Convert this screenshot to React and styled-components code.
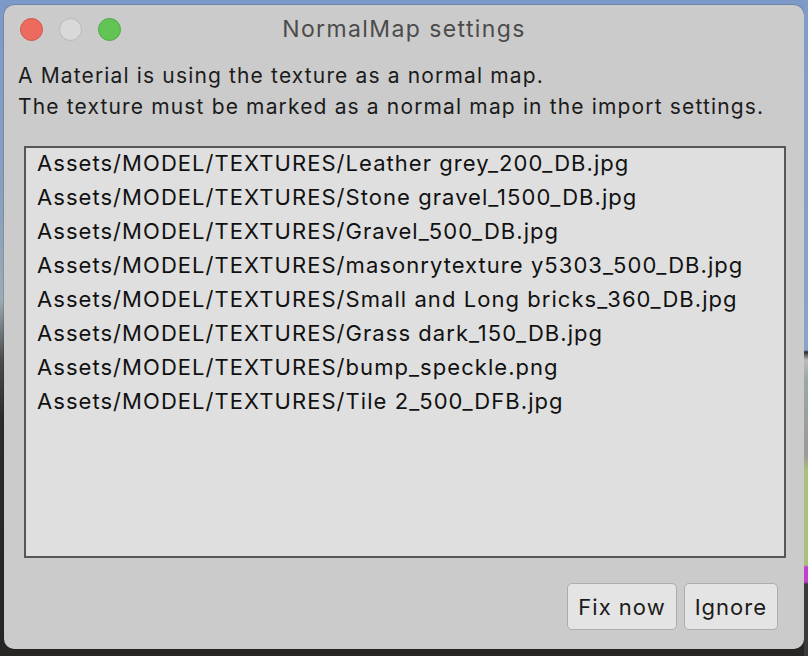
import React from "react";
import styled, { createGlobalStyle } from "styled-components";

const Global = createGlobalStyle`
  html, body { margin: 0; padding: 0; }
  body {
    width: 808px;
    height: 656px;
    overflow: hidden;
    background: linear-gradient(180deg, #7d99c7 0px, #8aa0bd 200px, #9aabb3 300px, #4a4a4a 360px, #2c2b2a 420px, #272625 656px);
    font-family: Inter, "Noto Sans", sans-serif;
  }
`;

const Desktop = styled.div`
  padding: 5px 4px 7px 4px;
  box-sizing: border-box;
  height: 656px;
  display: flex;
  position: relative;
`;

const SideStrip = styled.div`
  position: absolute;
  right: 0;
  top: 0;
  width: 4px;
  height: 656px;
  background: linear-gradient(180deg, #7f9cc8 0px, #8aa3c9 350px, #2a2a2a 352px, #bbbbbb 360px, #9aa6a6 380px, #9a9a9a 455px, #a8c07a 470px, #a8c07a 565px, #c23fd0 567px, #c23fd0 582px, #3a3a3a 584px);
`;

const Window = styled.div`
  flex: 1;
  background: #cbcbcb;
  border-radius: 10px;
  display: flex;
  flex-direction: column;
  overflow: hidden;
  box-shadow: 0 0 0 0.5px rgba(0,0,0,0.25);
`;

const TitleBar = styled.div`
  height: 48px;
  display: flex;
  align-items: center;
  position: relative;
  padding-left: 16px;
  gap: 16px;
`;

const Light = styled.span`
  width: 23px;
  height: 23px;
  border-radius: 50%;
  box-sizing: border-box;
  background: ${(p) => p.$bg};
  border: 1px solid ${(p) => p.$border};
`;

const Title = styled.div`
  position: absolute;
  left: 0;
  right: 0;
  top: 0;
  height: 48px;
  line-height: 48px;
  text-align: center;
  font-size: 23px;
  letter-spacing: 1.4px;
  color: #4b4b4b;
  pointer-events: none;
`;

const Message = styled.div`
  margin: 7px 0 0 14px;
  font-size: 21px;
  letter-spacing: 1.15px;
  line-height: 31px;
  color: #1b1b1b;
  white-space: nowrap;
`;

const ListBox = styled.div`
  margin: 24px 18px 0 20px;
  height: 412px;
  box-sizing: border-box;
  border: 2px solid #575757;
  background: #dfdfdf;
  padding: 0 0 0 11px;
  overflow: hidden;
`;

const Items = styled.div`
  margin-top: -2px;
`;

const Item = styled.div`
  font-size: 22px;
  letter-spacing: 1.05px;
  line-height: 34px;
  color: #111;
  white-space: nowrap;
`;

const Footer = styled.div`
  display: flex;
  justify-content: flex-end;
  gap: 7px;
  padding: 25px 26px 0 0;
`;

const Button = styled.button`
  height: 47px;
  padding: 0 10px;
  font-family: Inter, "Noto Sans", sans-serif;
  font-size: 22px;
  letter-spacing: 1px;
  color: #1b1b1b;
  background: #e4e4e4;
  border: 1px solid #adadad;
  border-radius: 5px;
  box-sizing: border-box;
`;

const files = [
  "Assets/MODEL/TEXTURES/Leather grey_200_DB.jpg",
  "Assets/MODEL/TEXTURES/Stone gravel_1500_DB.jpg",
  "Assets/MODEL/TEXTURES/Gravel_500_DB.jpg",
  "Assets/MODEL/TEXTURES/masonrytexture y5303_500_DB.jpg",
  "Assets/MODEL/TEXTURES/Small and Long bricks_360_DB.jpg",
  "Assets/MODEL/TEXTURES/Grass dark_150_DB.jpg",
  "Assets/MODEL/TEXTURES/bump_speckle.png",
  "Assets/MODEL/TEXTURES/Tile 2_500_DFB.jpg",
];

export default function App() {
  return (
    <>
      <Global />
      <Desktop>
        <Window>
          <TitleBar>
            <Light $bg="#ed6a5e" $border="#d2554a" />
            <Light $bg="#d9d9d9" $border="#b9b9b9" />
            <Light $bg="#61c454" $border="#4ea944" />
            <Title>NormalMap settings</Title>
          </TitleBar>
          <Message>
            A Material is using the texture as a normal map.
            <br />
            The texture must be marked as a normal map in the import settings.
          </Message>
          <ListBox>
            <Items>
              {files.map((f) => (
                <Item key={f}>{f}</Item>
              ))}
            </Items>
          </ListBox>
          <Footer>
            <Button>Fix now</Button>
            <Button>Ignore</Button>
          </Footer>
        </Window>
        <SideStrip />
      </Desktop>
    </>
  );
}
